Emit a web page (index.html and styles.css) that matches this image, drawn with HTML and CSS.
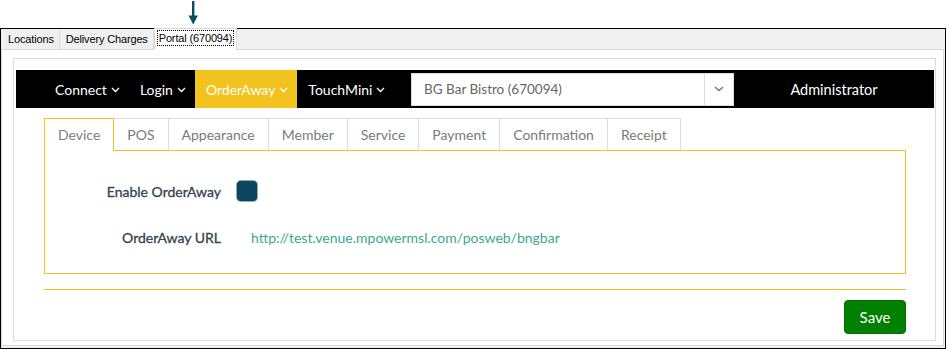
FILE: index.html
```html
<!DOCTYPE html>
<html lang="en">

<head>
    <meta charset="UTF-8">
    <meta name="viewport" content="width=device-width, initial-scale=1.0">
    <title>Portal Settings</title>
    <link rel="stylesheet" href="styles.css">
</head>

<body>
    <div class="pointer">
        <svg width="12" height="25" viewBox="0 0 12 25">
            <rect x="5" y="0" width="2.4" height="17" fill="#0e4a66" />
            <path d="M1.5 14.5 L10.9 14.5 L6.2 23.5 Z" fill="#0e4a66" />
        </svg>
    </div>

    <div class="window">
        <div class="win-tabs">
            <div class="win-tab">Locations</div>
            <div class="win-tab">Delivery Charges</div>
            <div class="win-tab active"><span class="focus">Portal (670094)</span></div>
        </div>

        <div class="win-page">
            <div class="frame">
                <nav class="topbar">
                    <a class="menu">Connect
                        <svg class="chev" width="9" height="6" viewBox="0 0 9 6"><path d="M1 1 L4.5 4.5 L8 1" /></svg>
                    </a>
                    <a class="menu">Login
                        <svg class="chev" width="9" height="6" viewBox="0 0 9 6"><path d="M1 1 L4.5 4.5 L8 1" /></svg>
                    </a>
                    <a class="menu on">OrderAway
                        <svg class="chev" width="9" height="6" viewBox="0 0 9 6"><path d="M1 1 L4.5 4.5 L8 1" /></svg>
                    </a>
                    <a class="menu">TouchMini
                        <svg class="chev" width="9" height="6" viewBox="0 0 9 6"><path d="M1 1 L4.5 4.5 L8 1" /></svg>
                    </a>

                    <div class="venue">
                        <span class="venue-name">BG Bar Bistro (670094)</span>
                        <span class="venue-caret">
                            <svg width="10" height="6" viewBox="0 0 10 6"><path d="M1 1 L5 4.6 L9 1" /></svg>
                        </span>
                    </div>
                    <div class="user">Administrator</div>
                </nav>

                <div class="content">
                    <ul class="tabs">
                        <li class="tab active">Device</li>
                        <li class="tab">POS</li>
                        <li class="tab">Appearance</li>
                        <li class="tab">Member</li>
                        <li class="tab">Service</li>
                        <li class="tab">Payment</li>
                        <li class="tab">Confirmation</li>
                        <li class="tab">Receipt</li>
                    </ul>

                    <div class="panel">
                        <div class="field">
                            <label>Enable OrderAway</label>
                            <span class="check"></span>
                        </div>
                        <div class="field">
                            <label>OrderAway URL</label>
                            <a class="url">http://test.venue.mpowermsl.com/posweb/bngbar</a>
                        </div>
                    </div>

                    <div class="actions">
                        <button class="save">Save</button>
                    </div>
                </div>
            </div>
        </div>
    </div>
</body>

</html>
```

FILE: styles.css
```css
* {
    box-sizing: border-box;
}

body {
    margin: 0;
    background-color: #fff;
    font-family: Lato, "Open Sans", sans-serif;
}

.pointer {
    height: 28px;
    padding: 1px 0 0 187px;
}

.pointer svg {
    display: block;
}

.window {
    width: 946px;
    height: 321px;
    border: 1px solid #000;
    background-color: #f0f0f0;
}

/* windows style tab strip */
.win-tabs {
    height: 20px;
    display: flex;
    align-items: flex-end;
    padding-left: 1px;
    font-family: "Liberation Sans", Arial, sans-serif;
    font-size: 11px;
    letter-spacing: -0.15px;
    color: #000;
}

.win-tab {
    height: 18px;
    line-height: 17px;
    padding: 0 5px 0 6px;
    border-right: 1px solid #d9d9d9;
}

.win-tab.active {
    position: relative;
    z-index: 1;
    height: 22px;
    margin-bottom: -1px;
    padding: 2px 3px 0 3px;
    background-color: #fff;
    border: 1px solid #d9d9d9;
    border-bottom: none;
    line-height: 14px;
}

.focus {
    display: inline-block;
    padding: 0 1px;
    outline: 1px dotted #000;
}

.win-page {
    height: 297px;
    margin: 0 1px 0 0;
    padding: 8px 0 0 11px;
    background-color: #fff;
    border: 1px solid #d9d9d9;
}

.frame {
    width: 923px;
    height: 283px;
    padding: 11px 1px 0 2px;
    border: 1px solid #dcdcdc;
}

/* top menu */
.topbar {
    height: 38px;
    display: flex;
    align-items: center;
    padding-left: 28px;
    background-color: #000;
}

.menu {
    flex-shrink: 0;
    height: 100%;
    display: flex;
    align-items: center;
    gap: 4px;
    padding: 0 9px 0 11px;
    color: #fff;
    font-size: 14px;
}

.menu.on {
    background-color: #f2c21e;
}

.chev {
    margin-top: 2px;
}

.chev path {
    fill: none;
    stroke: #fff;
    stroke-width: 1.3;
}

.venue {
    flex-shrink: 0;
    margin-left: auto;
    width: 323px;
    height: 33px;
    display: flex;
    background-color: #fff;
    border: 1px solid #ddd;
}

.venue-name {
    flex: 1;
    padding-left: 12px;
    line-height: 31px;
    font-size: 13.5px;
    color: #666;
}

.venue-caret {
    width: 29px;
    display: flex;
    align-items: center;
    justify-content: center;
    border-left: 1px solid #ddd;
}

.venue-caret path {
    fill: none;
    stroke: #777;
    stroke-width: 1.4;
}

.user {
    flex-shrink: 0;
    width: 200px;
    text-align: center;
    color: #fff;
    font-size: 14.5px;
}

/* settings area */
.content {
    padding: 10px 28px 0;
}

.tabs {
    display: flex;
    list-style: none;
    margin: 0;
    padding: 0;
}

.tab {
    height: 32px;
    padding: 0 13px;
    line-height: 31px;
    font-size: 14px;
    color: #7a7a7a;
    border: 1px solid #dcdcdc;
    border-left: none;
    border-bottom: none;
}

.tab.active {
    position: relative;
    z-index: 1;
    height: 33px;
    margin-bottom: -1px;
    background-color: #fff;
    border-color: #f2c21e;
    border-left: 1px solid #f2c21e;
    color: #808080;
}

.panel {
    height: 124px;
    padding-top: 28px;
    border: 1px solid #f2c21e;
}

.field {
    display: flex;
    align-items: center;
    height: 24px;
    margin-bottom: 22px;
}

.field label {
    width: 176px;
    text-align: right;
    font-size: 14px;
    color: #34434e;
    -webkit-text-stroke: 0.3px #34434e;
}

.check {
    width: 20px;
    height: 20px;
    margin-left: 16px;
    background-color: #0b4660;
    border-radius: 4px;
    box-shadow: 0 0 0 1px #9aa6ad;
}

.url {
    margin-left: 30px;
    font-size: 14px;
    color: #3aa98c;
}

/* yellow rule above the save button */
.actions {
    display: flex;
    justify-content: flex-end;
    margin-top: 15px;
    padding-top: 10px;
    border-top: 1px solid #f2c21e;
}

.save {
    width: 62px;
    height: 34px;
    background-color: #008000;
    border: 1px solid #006f00;
    border-radius: 4px;
    color: #fff;
    font-family: Lato, sans-serif;
    font-size: 15px;
}
```
